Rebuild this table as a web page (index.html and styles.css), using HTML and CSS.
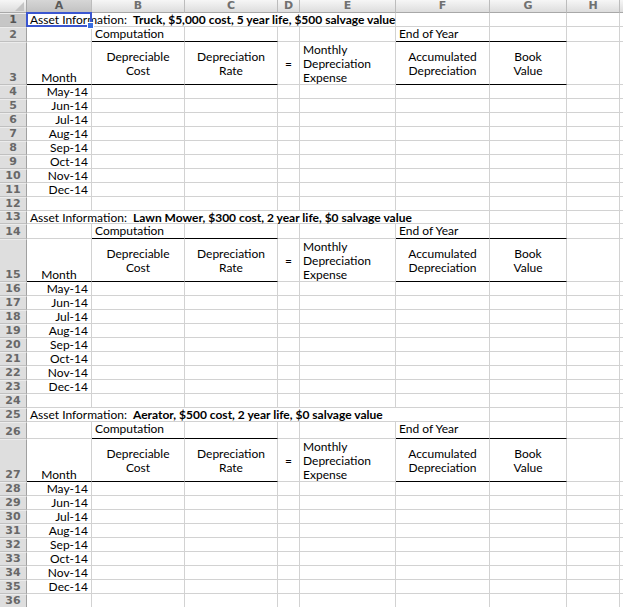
FILE: index.html
```html
<!DOCTYPE html>
<html>
<head>
<meta charset="utf-8">
<link rel="stylesheet" href="styles.css">
</head>
<body>
<div class="sheet">
  <div class="corner"></div><div class="ch csel">A</div><div class="ch">B</div><div class="ch">C</div><div class="ch">D</div><div class="ch">E</div><div class="ch">F</div><div class="ch">G</div><div class="ch">H</div><div class="ch"></div>

  <div class="rh rsel">1</div><div class="c s5">Asset Information:&nbsp; <b>Truck, $5,000 cost, 5 year life, $500 salvage value</b></div><div class="c"></div><div class="c"></div><div class="c"></div><div class="c"></div>
  <div class="rh">2</div><div class="c"></div><div class="c bb">Computation</div><div class="c bb"></div><div class="c"></div><div class="c"></div><div class="c bb">End of Year</div><div class="c bb"></div><div class="c"></div><div class="c"></div>
  <div class="rh">3</div><div class="c bb mo">Month</div><div class="c bb mid">Depreciable<br>Cost</div><div class="c bb mid">Depreciation<br>Rate</div><div class="c mid">=</div><div class="c top">Monthly<br>Depreciation<br>Expense</div><div class="c bb mid">Accumulated<br>Depreciation</div><div class="c bb mid">Book<br>Value</div><div class="c"></div><div class="c"></div>
  <div class="rh">4</div><div class="c d">May-14</div><div class="c"></div><div class="c"></div><div class="c"></div><div class="c"></div><div class="c"></div><div class="c"></div><div class="c"></div><div class="c"></div>
  <div class="rh">5</div><div class="c d">Jun-14</div><div class="c"></div><div class="c"></div><div class="c"></div><div class="c"></div><div class="c"></div><div class="c"></div><div class="c"></div><div class="c"></div>
  <div class="rh">6</div><div class="c d">Jul-14</div><div class="c"></div><div class="c"></div><div class="c"></div><div class="c"></div><div class="c"></div><div class="c"></div><div class="c"></div><div class="c"></div>
  <div class="rh">7</div><div class="c d">Aug-14</div><div class="c"></div><div class="c"></div><div class="c"></div><div class="c"></div><div class="c"></div><div class="c"></div><div class="c"></div><div class="c"></div>
  <div class="rh">8</div><div class="c d">Sep-14</div><div class="c"></div><div class="c"></div><div class="c"></div><div class="c"></div><div class="c"></div><div class="c"></div><div class="c"></div><div class="c"></div>
  <div class="rh">9</div><div class="c d">Oct-14</div><div class="c"></div><div class="c"></div><div class="c"></div><div class="c"></div><div class="c"></div><div class="c"></div><div class="c"></div><div class="c"></div>
  <div class="rh">10</div><div class="c d">Nov-14</div><div class="c"></div><div class="c"></div><div class="c"></div><div class="c"></div><div class="c"></div><div class="c"></div><div class="c"></div><div class="c"></div>
  <div class="rh">11</div><div class="c d">Dec-14</div><div class="c"></div><div class="c"></div><div class="c"></div><div class="c"></div><div class="c"></div><div class="c"></div><div class="c"></div><div class="c"></div>
  <div class="rh">12</div><div class="c"></div><div class="c"></div><div class="c"></div><div class="c"></div><div class="c"></div><div class="c"></div><div class="c"></div><div class="c"></div><div class="c"></div>

  <div class="rh">13</div><div class="c s6">Asset Information:&nbsp; <b>Lawn Mower, $300 cost, 2 year life, $0 salvage value</b></div><div class="c"></div><div class="c"></div><div class="c"></div>
  <div class="rh">14</div><div class="c"></div><div class="c bb">Computation</div><div class="c bb"></div><div class="c"></div><div class="c"></div><div class="c bb">End of Year</div><div class="c bb"></div><div class="c"></div><div class="c"></div>
  <div class="rh">15</div><div class="c bb mo">Month</div><div class="c bb mid">Depreciable<br>Cost</div><div class="c bb mid">Depreciation<br>Rate</div><div class="c mid">=</div><div class="c top">Monthly<br>Depreciation<br>Expense</div><div class="c bb mid">Accumulated<br>Depreciation</div><div class="c bb mid">Book<br>Value</div><div class="c"></div><div class="c"></div>
  <div class="rh">16</div><div class="c d">May-14</div><div class="c"></div><div class="c"></div><div class="c"></div><div class="c"></div><div class="c"></div><div class="c"></div><div class="c"></div><div class="c"></div>
  <div class="rh">17</div><div class="c d">Jun-14</div><div class="c"></div><div class="c"></div><div class="c"></div><div class="c"></div><div class="c"></div><div class="c"></div><div class="c"></div><div class="c"></div>
  <div class="rh">18</div><div class="c d">Jul-14</div><div class="c"></div><div class="c"></div><div class="c"></div><div class="c"></div><div class="c"></div><div class="c"></div><div class="c"></div><div class="c"></div>
  <div class="rh">19</div><div class="c d">Aug-14</div><div class="c"></div><div class="c"></div><div class="c"></div><div class="c"></div><div class="c"></div><div class="c"></div><div class="c"></div><div class="c"></div>
  <div class="rh">20</div><div class="c d">Sep-14</div><div class="c"></div><div class="c"></div><div class="c"></div><div class="c"></div><div class="c"></div><div class="c"></div><div class="c"></div><div class="c"></div>
  <div class="rh">21</div><div class="c d">Oct-14</div><div class="c"></div><div class="c"></div><div class="c"></div><div class="c"></div><div class="c"></div><div class="c"></div><div class="c"></div><div class="c"></div>
  <div class="rh">22</div><div class="c d">Nov-14</div><div class="c"></div><div class="c"></div><div class="c"></div><div class="c"></div><div class="c"></div><div class="c"></div><div class="c"></div><div class="c"></div>
  <div class="rh">23</div><div class="c d">Dec-14</div><div class="c"></div><div class="c"></div><div class="c"></div><div class="c"></div><div class="c"></div><div class="c"></div><div class="c"></div><div class="c"></div>
  <div class="rh">24</div><div class="c"></div><div class="c"></div><div class="c"></div><div class="c"></div><div class="c"></div><div class="c"></div><div class="c"></div><div class="c"></div><div class="c"></div>

  <div class="rh">25</div><div class="c s6">Asset Information:&nbsp; <b>Aerator, $500 cost, 2 year life, $0 salvage value</b></div><div class="c"></div><div class="c"></div><div class="c"></div>
  <div class="rh">26</div><div class="c"></div><div class="c bb">Computation</div><div class="c bb"></div><div class="c"></div><div class="c"></div><div class="c bb">End of Year</div><div class="c bb"></div><div class="c"></div><div class="c"></div>
  <div class="rh">27</div><div class="c bb mo">Month</div><div class="c bb mid">Depreciable<br>Cost</div><div class="c bb mid">Depreciation<br>Rate</div><div class="c mid">=</div><div class="c top">Monthly<br>Depreciation<br>Expense</div><div class="c bb mid">Accumulated<br>Depreciation</div><div class="c bb mid">Book<br>Value</div><div class="c"></div><div class="c"></div>
  <div class="rh">28</div><div class="c d">May-14</div><div class="c"></div><div class="c"></div><div class="c"></div><div class="c"></div><div class="c"></div><div class="c"></div><div class="c"></div><div class="c"></div>
  <div class="rh">29</div><div class="c d">Jun-14</div><div class="c"></div><div class="c"></div><div class="c"></div><div class="c"></div><div class="c"></div><div class="c"></div><div class="c"></div><div class="c"></div>
  <div class="rh">30</div><div class="c d">Jul-14</div><div class="c"></div><div class="c"></div><div class="c"></div><div class="c"></div><div class="c"></div><div class="c"></div><div class="c"></div><div class="c"></div>
  <div class="rh">31</div><div class="c d">Aug-14</div><div class="c"></div><div class="c"></div><div class="c"></div><div class="c"></div><div class="c"></div><div class="c"></div><div class="c"></div><div class="c"></div>
  <div class="rh">32</div><div class="c d">Sep-14</div><div class="c"></div><div class="c"></div><div class="c"></div><div class="c"></div><div class="c"></div><div class="c"></div><div class="c"></div><div class="c"></div>
  <div class="rh">33</div><div class="c d">Oct-14</div><div class="c"></div><div class="c"></div><div class="c"></div><div class="c"></div><div class="c"></div><div class="c"></div><div class="c"></div><div class="c"></div>
  <div class="rh">34</div><div class="c d">Nov-14</div><div class="c"></div><div class="c"></div><div class="c"></div><div class="c"></div><div class="c"></div><div class="c"></div><div class="c"></div><div class="c"></div>
  <div class="rh">35</div><div class="c d">Dec-14</div><div class="c"></div><div class="c"></div><div class="c"></div><div class="c"></div><div class="c"></div><div class="c"></div><div class="c"></div><div class="c"></div>
  <div class="rh">36</div><div class="c"></div><div class="c"></div><div class="c"></div><div class="c"></div><div class="c"></div><div class="c"></div><div class="c"></div><div class="c"></div><div class="c"></div>

  <div class="selbox"><span class="handle"></span></div>
</div>
</body>
</html>
```
FILE: styles.css
```css
html, body {
  margin: 0;
  padding: 0;
  background: #fff;
}
body {
  font-family: Lato, "DejaVu Sans", sans-serif;
  font-size: 12px;
  color: #000;
}
.sheet {
  position: relative;
  display: grid;
  grid-template-columns: 27px 65px 93px 93px 22px 96px 94px 77px 53px 20px;
  grid-template-rows:
    13px
    14px 15px 43px repeat(9, 14px)
    13px 15px 43px repeat(9, 14px)
    14px 17px 43px repeat(9, 14px);
  width: 623px;
  height: 607px;
  overflow: hidden;
}
.corner {
  box-sizing: border-box;
  background: linear-gradient(#f6f6f6, #dcdcdc);
  border-right: 1px solid #a8a8a8;
  border-bottom: 1px solid #a8a8a8;
  position: relative;
}
.corner::after {
  content: "";
  position: absolute;
  right: 2px;
  bottom: 1px;
  width: 0;
  height: 0;
  border-left: 9px solid transparent;
  border-bottom: 9px solid #c4c4c4;
}
.ch {
  box-sizing: border-box;
  background: linear-gradient(#f6f6f6, #dddddd);
  border-right: 1px solid #bcbcbc;
  border-bottom: 1px solid #a8a8a8;
  font-family: "DejaVu Sans", sans-serif;
  font-weight: bold;
  font-size: 11px;
  line-height: 12px;
  color: #707070;
  text-align: center;
}
.ch.csel {
  background: linear-gradient(#d6d6d6, #c2c2c2);
  color: #5a5a5a;
}
.rh {
  box-sizing: border-box;
  background: #dedede;
  border-right: 1px solid #a0a0a0;
  border-bottom: 1px solid #c0c0c0;
  border-top: 1px solid #ececec;
  font-family: "DejaVu Sans", sans-serif;
  font-weight: bold;
  font-size: 11px;
  line-height: 12px;
  color: #686868;
  display: flex;
  align-items: flex-end;
  justify-content: center;
}
.rh.rsel {
  background: #c6c6c6;
  color: #555;
}
.c {
  box-sizing: border-box;
  border-right: 1px solid #d2d2d2;
  border-bottom: 1px solid #d2d2d2;
  white-space: nowrap;
  line-height: 14px;
  padding: 0 3px;
  overflow: visible;
}
.c b {
  font-weight: bold;
}
.s5 {
  grid-column: span 5;
}
.s6 {
  grid-column: span 6;
}
.bb {
  border-bottom-color: #000;
}
.d {
  text-align: right;
  padding-right: 3px;
}
.mo {
  display: flex;
  align-items: flex-end;
  justify-content: center;
  line-height: 12px;
}
.mid {
  display: flex;
  align-items: center;
  justify-content: center;
  text-align: center;
  line-height: 14px;
  padding-top: 2px;
}
.top {
  line-height: 14px;
  padding-top: 1px;
}
.selbox {
  position: absolute;
  left: 26px;
  top: 12px;
  width: 66px;
  height: 15px;
  box-sizing: border-box;
  border: 2px solid #3a56d0;
}
.handle {
  position: absolute;
  right: -4px;
  bottom: -4px;
  width: 5px;
  height: 5px;
  background: #3a6ee0;
  border: 1px solid #fff;
}
```
